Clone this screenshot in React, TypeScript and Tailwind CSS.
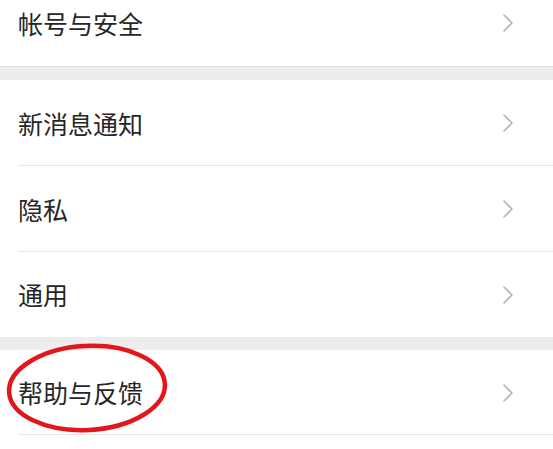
const font = { fontFamily: '"Noto Sans CJK SC", "Noto Sans", sans-serif' };

function Chevron() {
  return (
    <svg width="12" height="20" viewBox="0 0 12 20" className="shrink-0">
      <path d="M2 2 L10 10 L2 18" fill="none" stroke="#b4b4b4" strokeWidth="1.6" strokeLinecap="round" strokeLinejoin="round" />
    </svg>
  );
}

function Row({ label, divider = true, h = "h-[86px]" }: { label: string; divider?: boolean; h?: string }) {
  return (
    <div className={`relative flex ${h} items-center justify-between bg-white pl-[18px] pr-[39px]`}>
      <span className="text-[25px] leading-none text-[#262626]">{label}</span>
      <Chevron />
      {divider && <div className="absolute bottom-0 left-[18px] right-0 h-px bg-[#e6e6e6]" />}
    </div>
  );
}

export default function App() {
  return (
    <div className="relative h-[449px] w-[553px] overflow-hidden bg-white" style={font}>
      <div className="-mt-[20px]">
        <Row label="帐号与安全" divider={false} />
      </div>
      <div className="h-[14px] border-t border-[#dedede] bg-[#ededed]" />
      <Row label="新消息通知" />
      <Row label="隐私" />
      <Row label="通用" divider={false} h="h-[85px]" />
      <div className="h-[13px] bg-[#ededed]" />
      <Row label="帮助与反馈" h="h-[85px]" />
      <svg className="pointer-events-none absolute left-0 top-[340px]" width="180" height="100" viewBox="0 0 180 100">
        <ellipse cx="87" cy="48" rx="78" ry="42" fill="none" stroke="#e3161b" strokeWidth="4.5" transform="rotate(-3 87 48)" />
      </svg>
    </div>
  );
}
